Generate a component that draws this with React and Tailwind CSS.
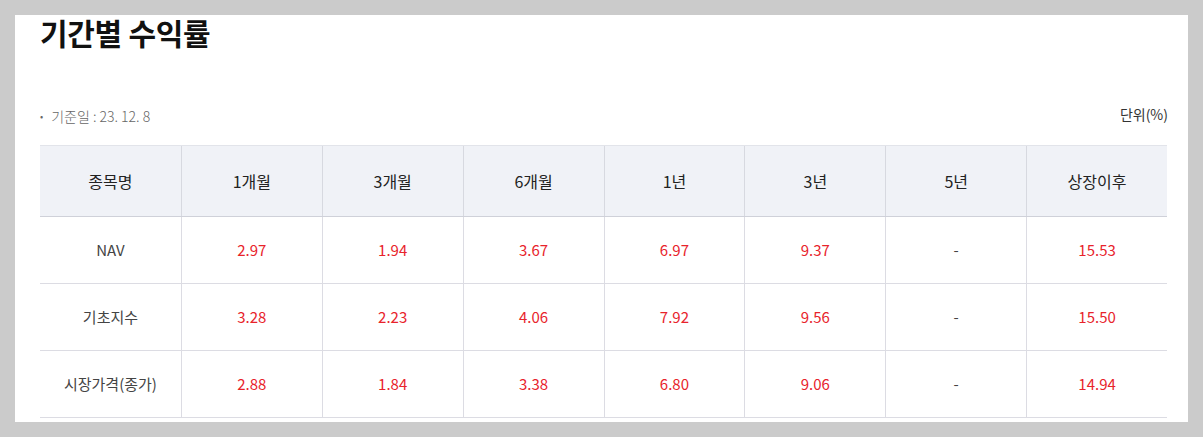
import React from "react";

const cols = ["종목명", "1개월", "3개월", "6개월", "1년", "3년", "5년", "상장이후"];
const rows = [
  ["NAV", "2.97", "1.94", "3.67", "6.97", "9.37", "-", "15.53"],
  ["기초지수", "3.28", "2.23", "4.06", "7.92", "9.56", "-", "15.50"],
  ["시장가격(종가)", "2.88", "1.84", "3.38", "6.80", "9.06", "-", "14.94"],
];

export default function App() {
  return (
    <div
      className="w-[1203px] h-[437px] bg-[#cbcbcb] pt-[15px] pl-[15px] overflow-hidden"
      style={{ fontFamily: '"Noto Sans CJK KR", "Noto Sans", sans-serif' }}
    >
      <div className="w-[1173px] h-[407px] bg-white pl-[25px] pr-[21px] flex flex-col">
        <h2 className="text-[30px] leading-[36px] font-bold text-[#111] tracking-[-0.3px] -mt-[1px]">
          기간별 수익률
        </h2>
        <div className="mt-[46px] flex items-end justify-between h-[30px]">
          <div className="flex items-center text-[14px] leading-[20px] text-[#666] font-light">
            <span className="mr-[8px] text-[10px]">•</span>
            <span>기준일 : 23. 12. 8</span>
          </div>
          <div className="text-[14px] leading-[20px] text-[#333] mb-[2px] -mr-[1px]">단위(%)</div>
        </div>
        <div className="mt-[19px] border-t border-[#e2e4ea]">
          <div className="grid grid-cols-8 bg-[#f0f2f7] h-[71px] border-b border-[#cfd1d9]">
            {cols.map((c, i) => (
              <div
                key={i}
                className={`flex items-center justify-center text-[16px] text-[#222] ${
                  i > 0 ? "border-l border-[#d7d9e0]" : ""
                }`}
              >
                {c}
              </div>
            ))}
          </div>
          {rows.map((r, ri) => (
            <div key={ri} className="grid grid-cols-8 h-[67px] border-b border-[#dcdce3]">
              {r.map((v, i) => (
                <div
                  key={i}
                  className={`flex items-center justify-center text-[15px] ${
                    i > 0 ? "border-l border-[#dcdce3]" : ""
                  } ${i === 0 || v === "-" ? "text-[#444]" : "text-[#e8232b]"}`}
                >
                  {v}
                </div>
              ))}
            </div>
          ))}
        </div>
      </div>
    </div>
  );
}
